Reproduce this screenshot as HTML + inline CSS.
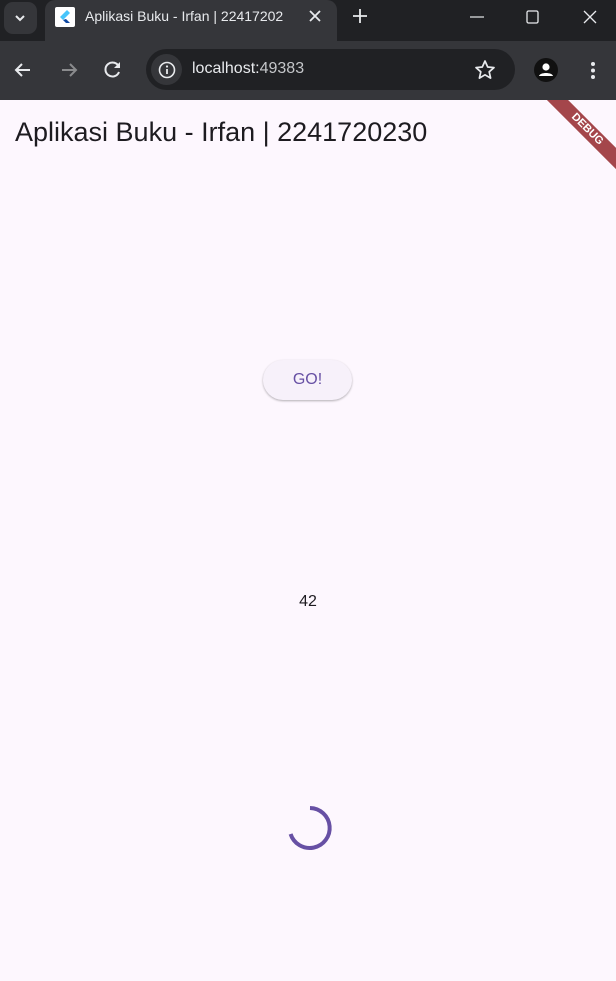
<!DOCTYPE html>
<html><head><meta charset="utf-8"><style>
*{margin:0;padding:0;box-sizing:border-box}
body{width:616px;height:981px;overflow:hidden;background:#fdf7fe;font-family:"Liberation Sans",sans-serif;position:relative}
.top{position:absolute;left:0;top:0;width:616px;height:41px;background:#202124}
.tab{position:absolute;left:45px;top:0;width:292px;height:41px;background:#35363a;border-radius:10px 10px 0 0}
.bar{position:absolute;left:0;top:41px;width:616px;height:59px;background:#35363a}
.url{position:absolute;left:146px;top:49px;width:369px;height:41px;background:#202124;border-radius:21px}
.t{position:absolute;color:#e8eaed;font-size:14px;white-space:nowrap}
</style></head><body>
<div class="top"></div>
<div style="position:absolute;left:4px;top:2px;width:33px;height:32px;background:#35363a;border-radius:9px"></div>
<svg style="position:absolute;left:12px;top:10px" width="16" height="16"><path d="M4 6l4 4 4-4" stroke="#e8eaed" stroke-width="2" fill="none"/></svg>
<div class="tab"></div>
<div style="position:absolute;left:55px;top:7px;width:20px;height:20px;background:#fff;border-radius:2px"></div>
<svg style="position:absolute;left:55px;top:7px" width="20" height="20"><path d="M12 3L5 10l3 3 7-7z" fill="#47c5fb"/><path d="M8 13l3 3h4l-4-4z" fill="#0d47a1"/></svg>
<div class="t" style="left:85px;top:8px;width:218px;overflow:hidden">Aplikasi Buku - Irfan | 22417202</div>
<svg style="position:absolute;left:308px;top:9px" width="14" height="14"><path d="M2 2l10 10M12 2L2 12" stroke="#e8eaed" stroke-width="1.8"/></svg>
<svg style="position:absolute;left:352px;top:8px" width="16" height="16"><path d="M8 1v14M1 8h14" stroke="#e8eaed" stroke-width="1.8"/></svg>
<svg style="position:absolute;left:470px;top:10px" width="136" height="16"><path d="M0 7h14" stroke="#e8eaed" stroke-width="1.2"/><rect x="57" y="1" width="11" height="12" rx="1.5" stroke="#e8eaed" stroke-width="1.3" fill="none"/><path d="M114 1l12 12M126 1l-12 12" stroke="#e8eaed" stroke-width="1.3"/></svg>
<div class="bar"></div>
<svg style="position:absolute;left:12px;top:60px" width="110" height="20"><path d="M18 10H4M10 4l-6 6 6 6" stroke="#e8eaed" stroke-width="2" fill="none"/><path d="M50 10h14M58 4l6 6-6 6" stroke="#8a8b8d" stroke-width="2" fill="none"/><path d="M107 7a7 7 0 1 0 0 5" stroke="#e8eaed" stroke-width="2" fill="none"/><path d="M108 2v6h-6z" fill="#e8eaed"/></svg>
<div class="url"></div>
<div style="position:absolute;left:151px;top:54px;width:31px;height:31px;border-radius:50%;background:#35363a"></div>
<svg style="position:absolute;left:158px;top:61px" width="18" height="18"><circle cx="9" cy="9" r="7.5" stroke="#e8eaed" stroke-width="1.6" fill="none"/><path d="M9 8v5" stroke="#e8eaed" stroke-width="1.8"/><circle cx="9" cy="5.5" r="1.1" fill="#e8eaed"/></svg>
<div class="t" style="left:192px;top:60px;font-size:16px">localhost:<span style="color:#c5c7ca">49383</span></div>
<svg style="position:absolute;left:474px;top:59px" width="22" height="22"><path d="M11 2l2.7 6 6.3.6-4.8 4.2 1.4 6.3L11 15.8 5.4 19.1l1.4-6.3L2 8.6 8.3 8z" stroke="#e8eaed" stroke-width="1.7" fill="none" stroke-linejoin="round"/></svg>
<svg style="position:absolute;left:534px;top:58px" width="24" height="24"><circle cx="12" cy="12" r="12" fill="#111"/><circle cx="12" cy="9" r="3.6" fill="#fff"/><path d="M5 18c1-4 13-4 14 0z" fill="#fff"/></svg>
<svg style="position:absolute;left:589px;top:60px" width="8" height="22"><circle cx="4" cy="4" r="2" fill="#e8eaed"/><circle cx="4" cy="10.5" r="2" fill="#e8eaed"/><circle cx="4" cy="17" r="2" fill="#e8eaed"/></svg>
<div style="position:absolute;left:15px;top:117px;font-size:27px;color:#1d1b20">Aplikasi Buku - Irfan | 2241720230</div>
<div style="position:absolute;left:520px;top:100px;width:96px;height:70px;overflow:hidden">
<div style="position:absolute;left:12px;top:22px;width:110px;height:15px;background:#a4464b;transform:rotate(45deg);color:#fff;font-size:11px;font-weight:bold;text-align:center;line-height:15px">DEBUG</div></div>
<div style="position:absolute;left:263px;top:360px;width:89px;height:40px;border-radius:20px;background:#f7f1fa;box-shadow:0 1px 2px rgba(0,0,0,.3);color:#6750a4;font-size:16px;text-align:center;line-height:40px">GO!</div>
<div style="position:absolute;left:0;width:616px;top:593px;text-align:center;font-size:16px;color:#1d1b20">42</div>
<svg style="position:absolute;left:286px;top:804px" width="48" height="48"><path d="M24 4A20 20 0 1 1 4.6 30" stroke="#6750a4" stroke-width="4" fill="none"/></svg>
</body></html>
